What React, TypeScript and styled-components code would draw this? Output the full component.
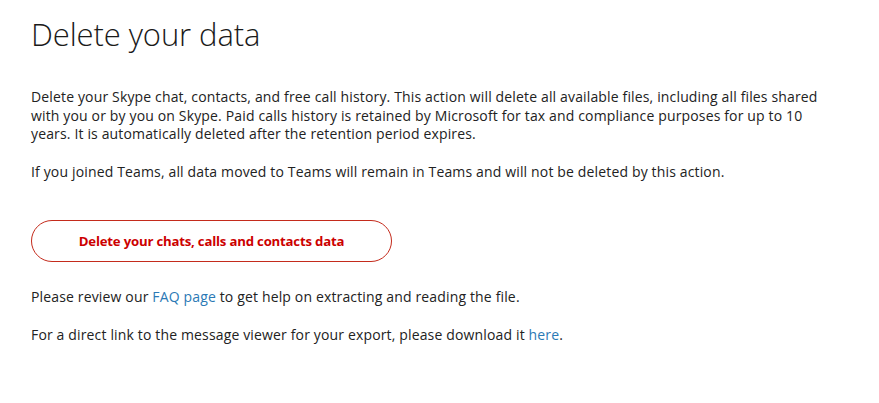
import { createGlobalStyle, styled } from 'styled-components'

const Global = createGlobalStyle`
  html, body {
    margin: 0;
    background: #fff;
  }
  body {
    font-family: 'Open Sans', 'Noto Sans', sans-serif;
    color: #222;
  }
`

const Page = styled.main`
  padding: 14px 31px 40px;
  width: 800px;
`

const Title = styled.h1`
  margin: 0 0 34px;
  font-size: 31px;
  font-weight: 300;
  line-height: 40px;
  color: #1a1a1a;
  letter-spacing: -0.1px;
`

const Para = styled.p<{ $gap?: number }>`
  margin: 0 0 ${p => p.$gap ?? 19}px;
  font-size: 14px;
  line-height: 18.5px;
  letter-spacing: 0.15px;
  max-width: 792px;
`

const Link = styled.a`
  color: #2b79b5;
  text-decoration: none;
`

const DangerButton = styled.button`
  display: block;
  width: 361px;
  height: 42px;
  margin: 39px 0 26px;
  border: 1px solid #c42b1c;
  border-radius: 21px;
  background: #fff;
  color: #c00;
  font-family: 'Open Sans', 'Noto Sans', sans-serif;
  font-weight: 700;
  font-size: 13.2px;
  letter-spacing: -0.2px;
  cursor: pointer;
`

export default function App() {
  return (
    <>
      <Global />
      <Page>
        <Title>Delete your data</Title>
        <Para>
          Delete your Skype chat, contacts, and free call history. This action will delete all available files, including all files shared
          with you or by you on Skype. Paid calls history is retained by Microsoft for tax and compliance purposes for up to 10
          years. It is automatically deleted after the retention period expires.
        </Para>
        <Para $gap={0}>
          If you joined Teams, all data moved to Teams will remain in Teams and will not be deleted by this action.
        </Para>
        <DangerButton>Delete your chats, calls and contacts data</DangerButton>
        <Para>
          Please review our <Link href="#">FAQ page</Link> to get help on extracting and reading the file.
        </Para>
        <Para>
          For a direct link to the message viewer for your export, please download it <Link href="#">here</Link>.
        </Para>
      </Page>
    </>
  )
}
